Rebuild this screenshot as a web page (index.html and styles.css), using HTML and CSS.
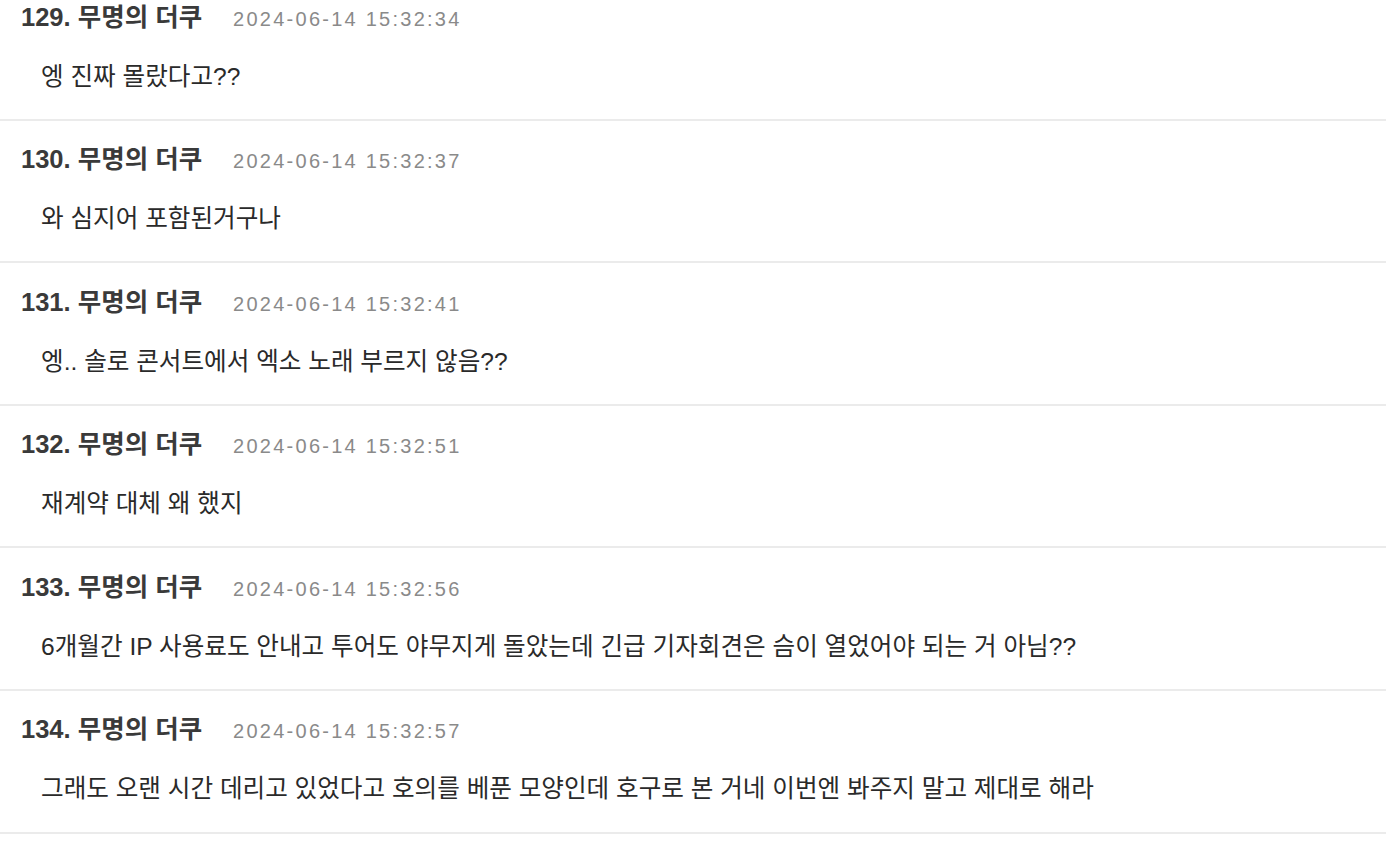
FILE: index.html
```html
<!DOCTYPE html>
<html lang="ko">
<head>
<meta charset="utf-8">
<title>댓글</title>
<link rel="stylesheet" href="styles.css">
</head>
<body>
<div class="comments">
  <div class="comment">
    <div class="comment-head"><span class="comment-name">129. 무명의 더쿠</span><span class="comment-date">2024-06-14 15:32:34</span></div>
    <div class="comment-body">엥 진짜 몰랐다고??</div>
  </div>
  <div class="comment">
    <div class="comment-head"><span class="comment-name">130. 무명의 더쿠</span><span class="comment-date">2024-06-14 15:32:37</span></div>
    <div class="comment-body">와 심지어 포함된거구나</div>
  </div>
  <div class="comment">
    <div class="comment-head"><span class="comment-name">131. 무명의 더쿠</span><span class="comment-date">2024-06-14 15:32:41</span></div>
    <div class="comment-body">엥.. 솔로 콘서트에서 엑소 노래 부르지 않음??</div>
  </div>
  <div class="comment">
    <div class="comment-head"><span class="comment-name">132. 무명의 더쿠</span><span class="comment-date">2024-06-14 15:32:51</span></div>
    <div class="comment-body">재계약 대체 왜 했지</div>
  </div>
  <div class="comment">
    <div class="comment-head"><span class="comment-name">133. 무명의 더쿠</span><span class="comment-date">2024-06-14 15:32:56</span></div>
    <div class="comment-body">6개월간 IP 사용료도 안내고 투어도 야무지게 돌았는데 긴급 기자회견은 슴이 열었어야 되는 거 아님??</div>
  </div>
  <div class="comment">
    <div class="comment-head"><span class="comment-name">134. 무명의 더쿠</span><span class="comment-date">2024-06-14 15:32:57</span></div>
    <div class="comment-body">그래도 오랜 시간 데리고 있었다고 호의를 베푼 모양인데 호구로 본 거네 이번엔 봐주지 말고 제대로 해라</div>
  </div>
</div>
</body>
</html>
```
FILE: styles.css
```css
html, body {
  margin: 0;
  padding: 0;
  background: #ffffff;
}

body {
  font-family: "Liberation Sans", "Noto Sans CJK KR", sans-serif;
  overflow: hidden;
}

.comments {
  margin-top: -22px;
}

.comment {
  padding: 23.5px 0 27.1px 0;
  border-bottom: 2px solid #ebebeb;
}

.comment-head {
  display: flex;
  align-items: baseline;
  gap: 31px;
  padding-left: 21px;
  height: 30px;
  line-height: 30px;
}

.comment-name {
  font-size: 25.5px;
  font-weight: 700;
  color: #3a3a3a;
}

.comment-date {
  font-size: 20px;
  color: #8a8a8a;
  letter-spacing: 2.25px;
}

.comment-body {
  margin-top: 30px;
  padding-left: 41px;
  font-size: 24.6px;
  line-height: 30px;
  color: #2a2a2a;
}
```
